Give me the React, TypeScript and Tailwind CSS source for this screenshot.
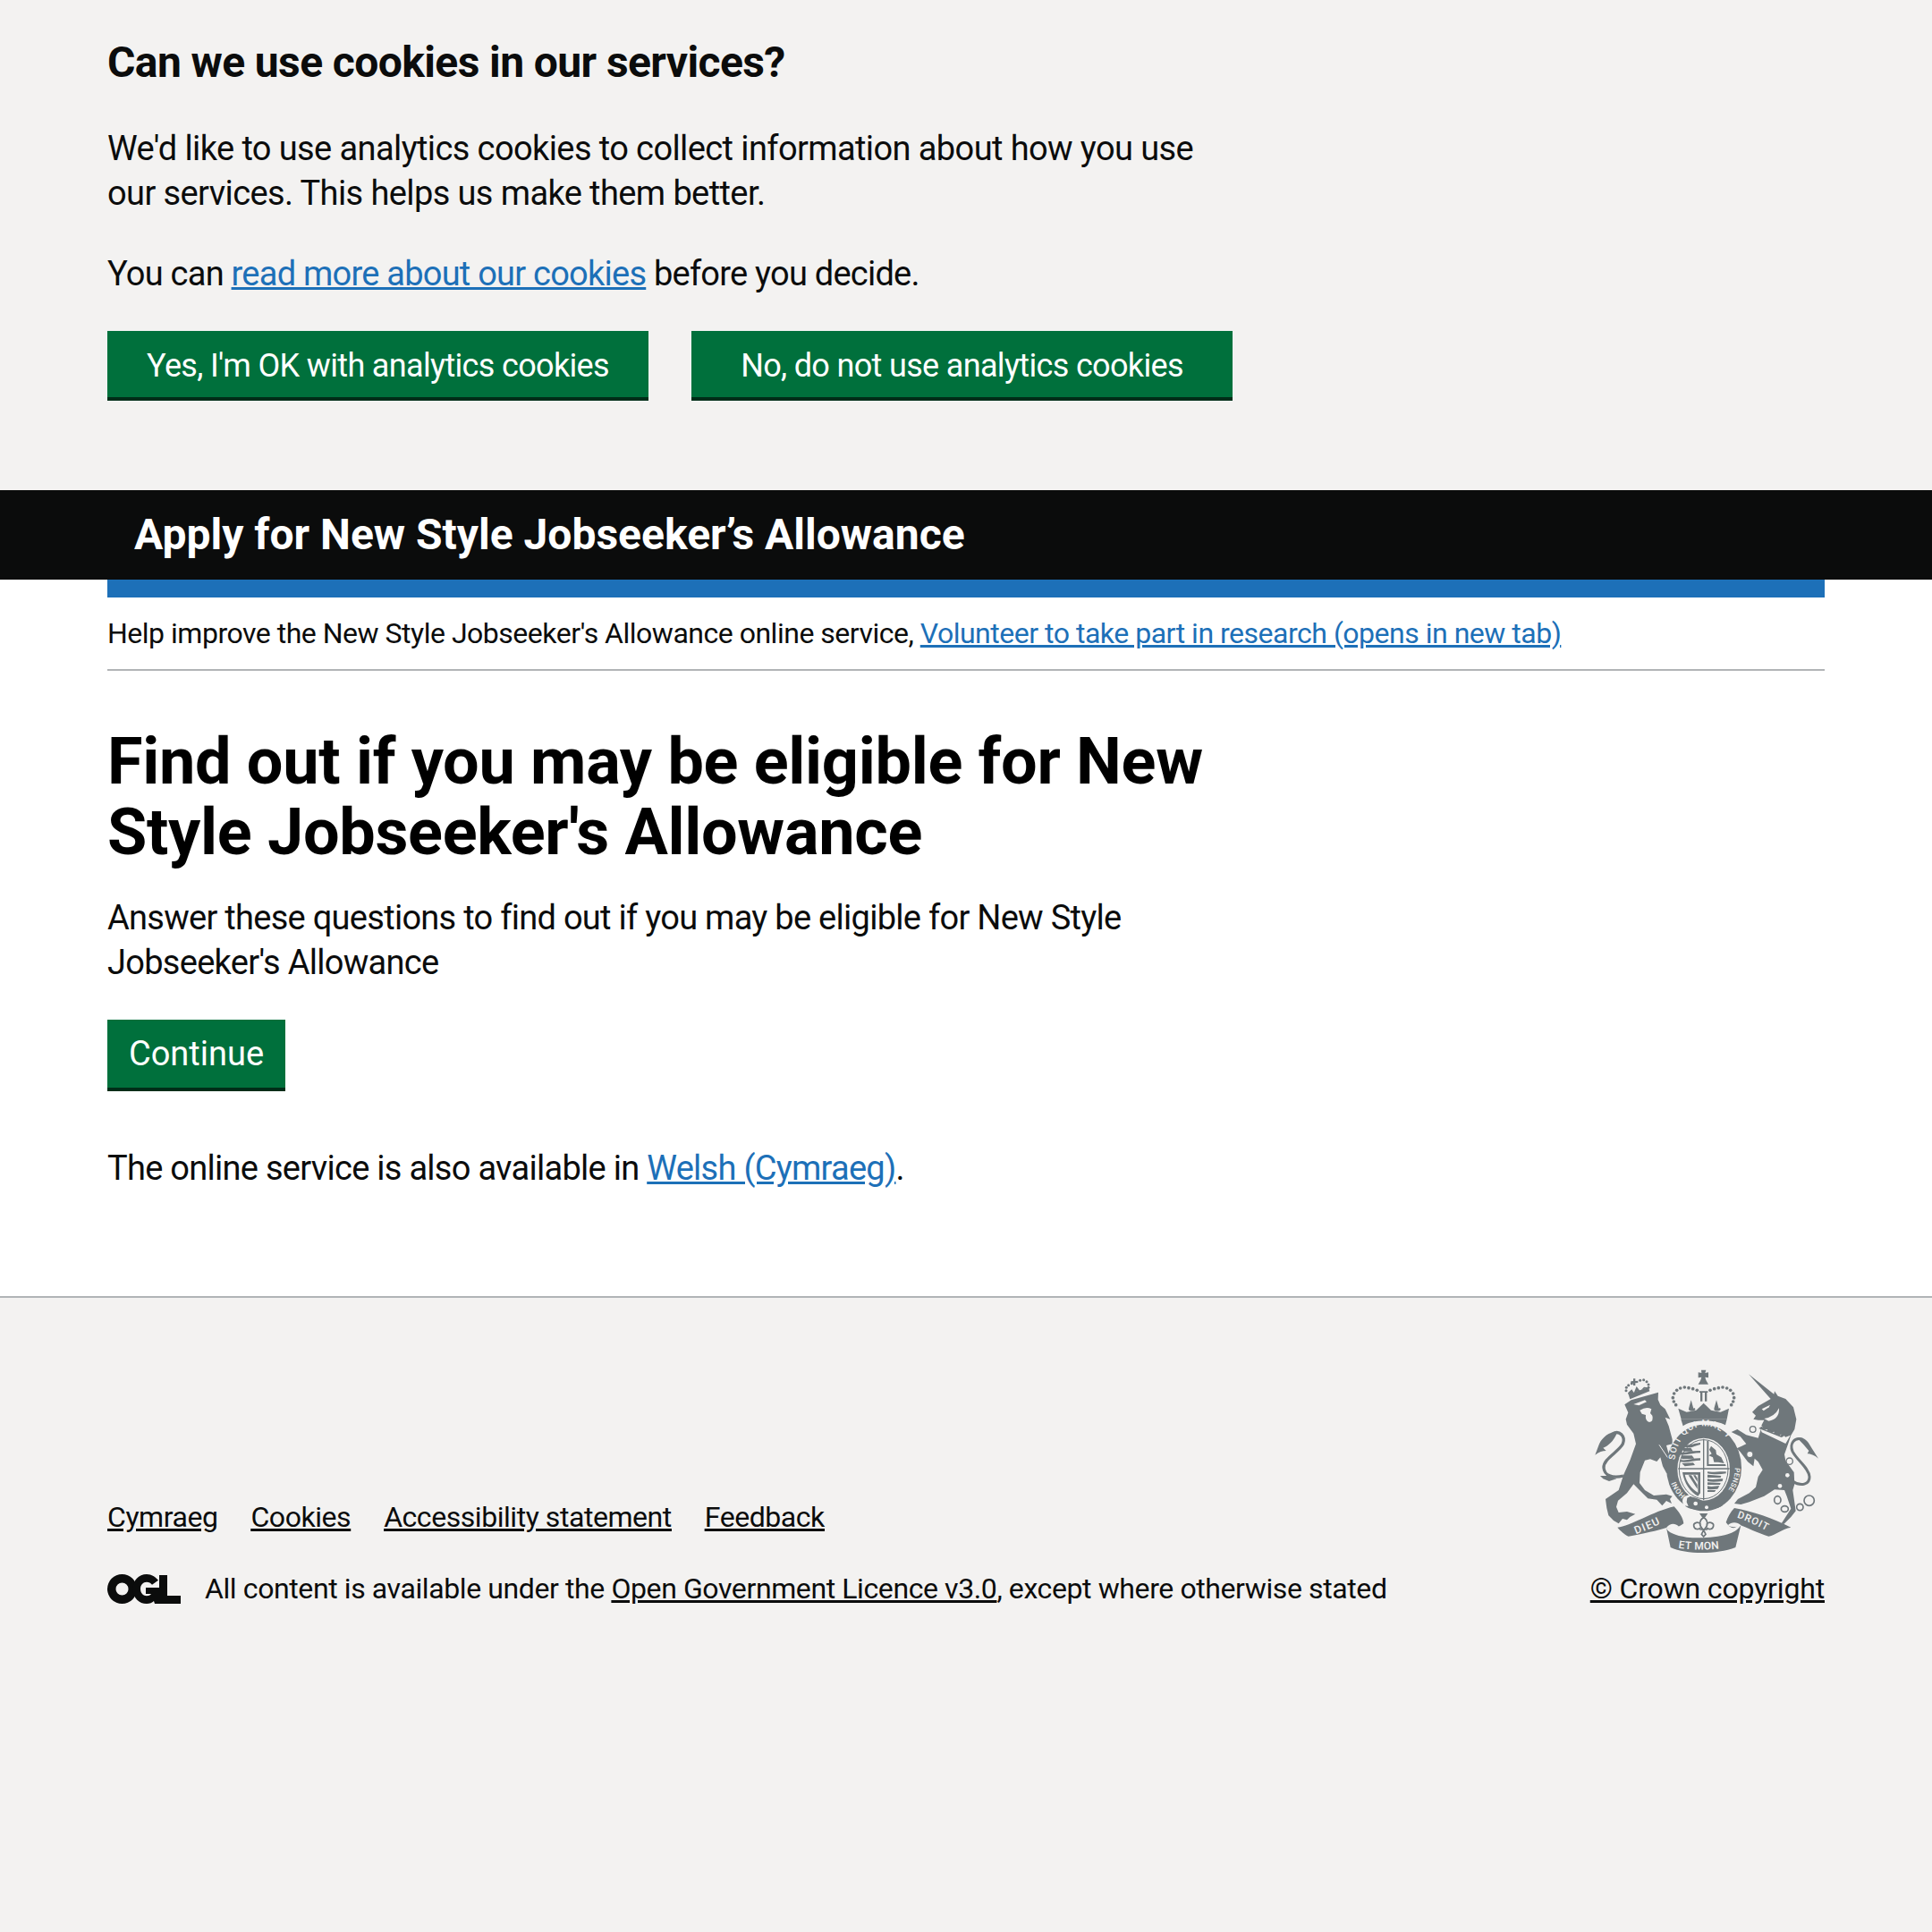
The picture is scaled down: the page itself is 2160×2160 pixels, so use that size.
import React from "react";

const font = { fontFamily: 'Roboto, "Noto Sans", sans-serif' };

function Ogl() {
  return (
    <svg viewBox="0 0 82 33" className="w-[82px] h-[33px] shrink-0 fill-[#0b0c0c]">
      <path fillRule="evenodd" d="M16.5 0a16.5 16.5 0 1 0 0 33 16.5 16.5 0 0 0 0-33zm0 9.5a7 7 0 1 1 0 14 7 7 0 0 1 0-14z" />
      <path d="M44 0C35 0 28.500 7 28.500 16.500S35 33 44 33c3.500 0 6-1 8-3l1 3h5V15H43v7h6c-1 1.500-3 2.200-5 2.200-4 0-7-3.200-7-7.700s3-7.700 7-7.700c2.500 0 4.500 1 6 3l7-5C54 3 49.500 0 44 0z" />
      <path d="M58 1h9v23h15v9H58z" />
    </svg>
  );
}

function Crest() {
  const c = "#6f777b";
  const bg = "#f3f2f1";
  const pearls: [number, number][] = [
    [404, 214],[397, 203],[394, 190],[398, 176],[407, 165],[419, 158],[433, 155],[447, 157],[461, 160],[475, 165],
    [519, 165],[533, 160],[547, 157],[561, 155],[575, 158],[587, 165],[596, 176],[599, 190],[596, 203],[590, 214],
  ];
  const lionPearls: [number, number][] = [
    [237, 166],[238, 156],[245, 148],[256, 142],[284, 132],[296, 130],[306, 136],[312, 146],[312, 156],
  ];
  const ringFont = { fontFamily: "Roboto, sans-serif", fontWeight: 500 };
  return (
    <svg viewBox="132 95 750 615" className="w-[250px] h-[205px]" fill={c}>
      {/* lion tail */}
      <path fill="none" stroke={c} strokeWidth="10" d="M190 312C215 296 236 320 226 345 212 372 160 395 162 425 164 450 190 462 228 452" />
      <path d="M198 306C170 308 150 335 145 350L133 382C146 372 158 368 170 368L160 358C178 352 195 335 205 312Z" />
      <path d="M150 452L175 452 205 462 180 470 160 462Z" />
      {/* lion */}
      <path d="M232 213L254 198 345 172 344 196 352 214 368 228 385 262 368 256 380 285 392 330 392 345 372 350 378 372 398 420 406 440 392 452 372 442 360 420 352 390 340 404 318 396 300 400 284 440 282 476 300 500 330 518 372 514 392 520 384 530 390 545 372 536 358 552 340 532 310 528 282 500 262 480 240 510 210 535 204 556 212 575 240 572 268 580 250 590 240 600 225 596 212 612 195 602 178 585 172 560 168 530 190 515 212 500 228 450 250 400 270 345 262 310 240 280 236 262 244 240Z" />
      <path fill={bg} d="M262 212L300 198 306 204 280 216Z" />
      <path fill={bg} d="M283 232Q305 218 322 228L318 242 325 250Q330 268 315 272 300 268 303 248L290 244Z" />
      <path fill="none" stroke={bg} strokeWidth="3" d="M348 348L404 432" />
      {/* lion crown */}
      <path d="M245 178L312 155 316 168 250 195Z" />
      <path d="M243 174L256 162 263 174 272 152 284 168 297 154 311 156 245 180Z" />
      <path d="M261 126h7v8l9-1v7l-9 1v8h-7v-8l-8 1v-7l8-1z" />
      {lionPearls.map(([x, y], i) => (
        <circle key={i} cx={x} cy={y} r="4.500" />
      ))}
      {/* royal crown */}
      <path d="M489 97h16l-3 10 11-2v18l-11-2 3 10 8 14h-34l8-14 3-10-11 2v-18l11 2z" />
      {pearls.map(([x, y], i) => (
        <circle key={i} cx={x} cy={y} r="5.500" />
      ))}
      <path d="M486 172h7v30h-7zM501 172h7v30h-7zM483 168h28v5h-28z" />
      <path d="M447 226l8-28 8 28c4-3 6-1 6 4-6 6-16 6-22 0 0-5 2-7 0-4zM532 226l8-28 8 28c4-3 6-1 6 4-6 6-16 6-22 0 0-5 2-7 0-4z" />
      <path d="M412 226L440 238 472 232 497 208 522 232 554 238 582 226 575 262H422Z" />
      <path fill={bg} d="M430 285C450 262 545 262 567 283 540 272 455 272 430 285Z" />
      <path d="M421 262H575L570 282C540 262 455 262 428 285Z" />
      {/* garter */}
      <ellipse cx="498" cy="425" rx="126" ry="145" />
      <ellipse cx="497" cy="430" rx="88" ry="105" fill={bg} />
      <ellipse cx="497" cy="430" rx="82" ry="99" fill="none" stroke={c} strokeWidth="3" />
      <path id="ring1" fill="none" d="M401 405A98 118 0 0 1 600 405" />
      <text {...ringFont} fontSize="30" fill={bg} letterSpacing="3">
        <textPath href="#ring1" startOffset="6">SOIT QUI MAL Y</textPath>
      </text>
      <path id="ring2" fill="none" d="M602 425A98 118 0 0 1 566 516" />
      <text {...ringFont} fontSize="24" fill={bg} letterSpacing="1">
        <textPath href="#ring2">PENSE</textPath>
      </text>
      <path id="ring3" fill="none" d="M436 517A98 118 0 0 1 396 445" />
      <text {...ringFont} fontSize="24" fill={bg}>
        <textPath href="#ring3">HONI</textPath>
      </text>
      {/* quarters */}
      <path d="M428 352c12-6 30-3 38-8l20-3v6l-20 6c-8 5-26 6-38-1zM418 372c18 4 42-6 68-4v7c-22 0-44 9-68 6zM418 398c20 5 44-6 68-5v7c-22 0-46 10-68 5z" />
      <path d="M424 358l30 0 8 12-32 0zM422 384l36 0 8 10-42 2zM424 410l38-2 6 8-34 4z" />
      <path d="M508 334l6 1v78l56 0 2 6h-64z" />
      <path d="M522 352l16 14 2 14 16 10 10 20-20-4-14 0-4-16-14-6 10-6-8-14z" />
      <path d="M426 440h60v70l-8 10c-26-14-46-42-52-80zM434 448c6 26 22 46 44 60V448z" />
      <path d="M446 450l30 46v-14l-20-32zM462 450l14 22v-12l-6-10z" />
      <path d="M510 438c18 4 40-2 62 0v6c-20 4-44 4-62 0zM510 448l46 4-2 6-44 0zM510 462c16 4 36 0 52 0l-2 8c-16 2-36 4-50 0zM510 474l44 2-2 6-42 0zM510 486c14 4 28 0 40 0l-6 10c-12 0-24 4-34 0zM510 500l28 0-4 6-24 0z" />
      <path d="M495 328h4v206h-4zM412 426h172v4H412z" />
      {/* buckle */}
      <path d="M428 528C440 518 470 520 500 540 530 544 552 536 566 524L560 552C530 572 460 572 436 554Z" />
      <path fill={bg} d="M432 552c-8-12-8-24 2-32l20-6 4 4-16 8-2 14 6 14z" />
      <circle cx="470" cy="545" r="7" fill={bg} />
      <circle cx="507" cy="558" r="6" fill={bg} />
      {/* unicorn */}
      <path d="M648 111L733 178 735 168 746 184 772 194 798 222 808 262 802 296 790 316 782 340 768 380 772 402 800 440 802 480 796 500 806 570 790 590 766 614 758 612 772 590 790 562 776 520 768 500 735 498 700 520 650 540 622 548 600 545 612 530 650 510 672 490 680 455 695 432 680 405 668 394 664 420 645 405 620 372 608 360 625 352 640 345 620 320 590 305 610 296 640 315 680 325 688 300 690 285 700 265 680 265 664 262 672 250 660 238 680 218 722 194Z" />
      <path fill={bg} d="M692 228L720 214 716 222 698 234Z" />
      <path fill={bg} d="M700 260Q735 255 750 225 752 262 715 268Z" />
      <path fill={bg} d="M683 280L692 306 772 344 788 316 772 322 760 312 748 316 736 304 724 306 712 296 700 298 692 284Z" />
      <path d="M692 286l4 4 3-4 1 10 10 4 2-8 4 3 3-3 2 10 12 6 2-8 4 3 4-3 1 11 12 5 2-7 4 3 3-3 1 10-8 4-76-30z" />
      <g fill={bg} stroke={c} strokeWidth="4">
        <circle cx="662" cy="296" r="10" />
        <circle cx="652" cy="380" r="11" />
        <circle cx="785" cy="403" r="11" />
      </g>
      <circle cx="778" cy="450" r="7" fill={bg} />
      <circle cx="753" cy="486" r="7" fill={bg} />
      {/* unicorn tail and chain */}
      <path fill="none" stroke={c} strokeWidth="9" d="M830 330C800 320 785 345 795 370 810 400 850 425 852 455 853 480 825 490 795 470" />
      <path d="M812 326C835 318 850 340 860 360L882 394C868 382 855 378 845 378L850 368C840 355 825 340 812 326Z" />
      <g fill="none" stroke={c} strokeWidth="5">
        <ellipse cx="745" cy="533" rx="11" ry="13" />
        <ellipse cx="769" cy="563" rx="12" ry="10" />
        <ellipse cx="820" cy="557" rx="11" ry="11" />
        <circle cx="851" cy="535" r="17" />
      </g>
      {/* motto scroll */}
      <path d="M208 625C250 622 330 570 398 555 414 572 428 592 430 612 412 626 394 630 372 626 340 636 300 645 245 655 232 650 218 636 208 625Z" />
      <path d="M600 560C660 570 730 595 790 625 760 630 740 650 715 655 680 645 640 625 615 615 598 636 585 626 572 608 578 590 588 572 600 560Z" />
      <path d="M372 626C376 642 402 652 440 658 480 662 540 660 578 648 596 642 610 636 622 618L604 692C540 716 440 716 386 692Z" />
      <path fill={bg} d="M372 626C386 610 400 610 414 622 404 628 390 632 372 626ZM622 618C610 606 590 606 578 618 590 626 608 626 622 618Z" />
      <g {...ringFont} fill={bg}>
        <path id="m1" fill="none" d="M270 648C305 634 340 622 378 598" />
        <text fontSize="36" letterSpacing="4"><textPath href="#m1">DIEU</textPath></text>
        <path id="m2" fill="none" d="M412 694C460 702 530 702 585 690" />
        <text fontSize="36" letterSpacing="1"><textPath href="#m2">ET MON</textPath></text>
        <path id="m3" fill="none" d="M608 592C650 606 690 625 735 652" />
        <text fontSize="34" letterSpacing="3"><textPath href="#m3">DROIT</textPath></text>
      </g>
      {/* fleur */}
      <path d="M483 578h28l-8 12h-12z" />
      <path fill="none" stroke={c} strokeWidth="5" d="M497 590c-14 12-18 26-2 42 2 2 4 2 4 0 16-16 12-30-2-42zM488 616c-8-14-26-6-24 4 2 12 16 14 22 6M506 616c8-14 26-6 24 4-2 12-16 14-22 6M484 632h26M497 634l-7 14 7 8 7-8z" />
    </svg>
  );
}

const btn = "h-[78px] w-[605px] pt-[3px] bg-[#00703c] border-b-4 border-[#002d18] text-white text-[36px] tracking-[-0.66px]";

export default function App() {
  return (
    <div className="min-h-[2160px] bg-[#f3f2f1] text-[#0b0c0c] flex flex-col" style={font}>
      <div className="h-[548px] px-[120px] pt-[40px]">
        <h2 className="text-[48px] leading-[60px] font-bold tracking-[-0.6px]">Can we use cookies in our services?</h2>
        <p className="mt-[41px] text-[38px] leading-[50px] w-[1260px] tracking-[-0.6px]">We'd like to use analytics cookies to collect information about how you use our services. This helps us make them better.</p>
        <p className="mt-[40px] text-[38px] leading-[50px] tracking-[-0.76px]">You can <a className="underline text-[#1d70b8]">read more about our cookies</a> before you decide.</p>
        <div className="mt-[39px] flex gap-[48px]">
          <button className={btn}>Yes, I'm OK with analytics cookies</button>
          <button className={btn}>No, do not use analytics cookies</button>
        </div>
      </div>
      <div className="h-[100px] bg-[#0b0c0c] pl-[150px] flex items-center text-white font-bold text-[48px]">Apply for New Style Jobseeker’s Allowance</div>
      <div className="bg-white h-[803px] px-[120px] border-b-2 border-[#b1b4b6]">
        <div className="h-[20px] bg-[#1d70b8]" />
        <div className="h-[82px] border-b-2 border-[#b1b4b6] flex items-center text-[32px] tracking-[-0.49px]">
          <span>Help improve the New Style Jobseeker's Allowance online service, <a className="underline text-[#1d70b8]">Volunteer to take part in research (opens in new tab)</a></span>
        </div>
        <h1 className="mt-[62px] font-bold text-[72px] leading-[79px] w-[1300px] tracking-[-0.3px] text-black">Find out if you may be eligible for New Style Jobseeker's Allowance</h1>
        <p className="mt-[31px] text-[38px] leading-[50px] w-[1260px] tracking-[-0.72px]">Answer these questions to find out if you may be eligible for New Style Jobseeker's Allowance</p>
        <button className="block mt-[39px] w-[199px] h-[80px] pt-[1px] bg-[#00703c] border-b-4 border-[#002d18] text-white text-[38px]">Continue</button>
        <p className="mt-[61px] text-[38px] leading-[50px] tracking-[-0.72px]">The online service is also available in <a className="underline text-[#1d70b8]">Welsh (Cymraeg)</a>.</p>
      </div>
      <div className="px-[120px] pt-[80px] flex justify-between items-end">
        <div>
          <div className="flex gap-[37px] text-[32px] leading-[40px] underline mb-[40px] tracking-[-0.45px]"><a>Cymraeg</a><a>Cookies</a><a>Accessibility statement</a><a>Feedback</a></div>
          <div className="flex items-center gap-[27px] text-[32px] leading-[40px] tracking-[-0.4px]"><Ogl /><span>All content is available under the <a className="underline">Open Government Licence v3.0</a>, except where otherwise stated</span></div>
        </div>
        <div className="flex flex-col items-end">
          <div className="mr-[7px] mb-[20px]"><Crest /></div>
          <a className="underline text-[32px] leading-[40px] tracking-[-0.16px]">© Crown copyright</a>
        </div>
      </div>
    </div>
  );
}
